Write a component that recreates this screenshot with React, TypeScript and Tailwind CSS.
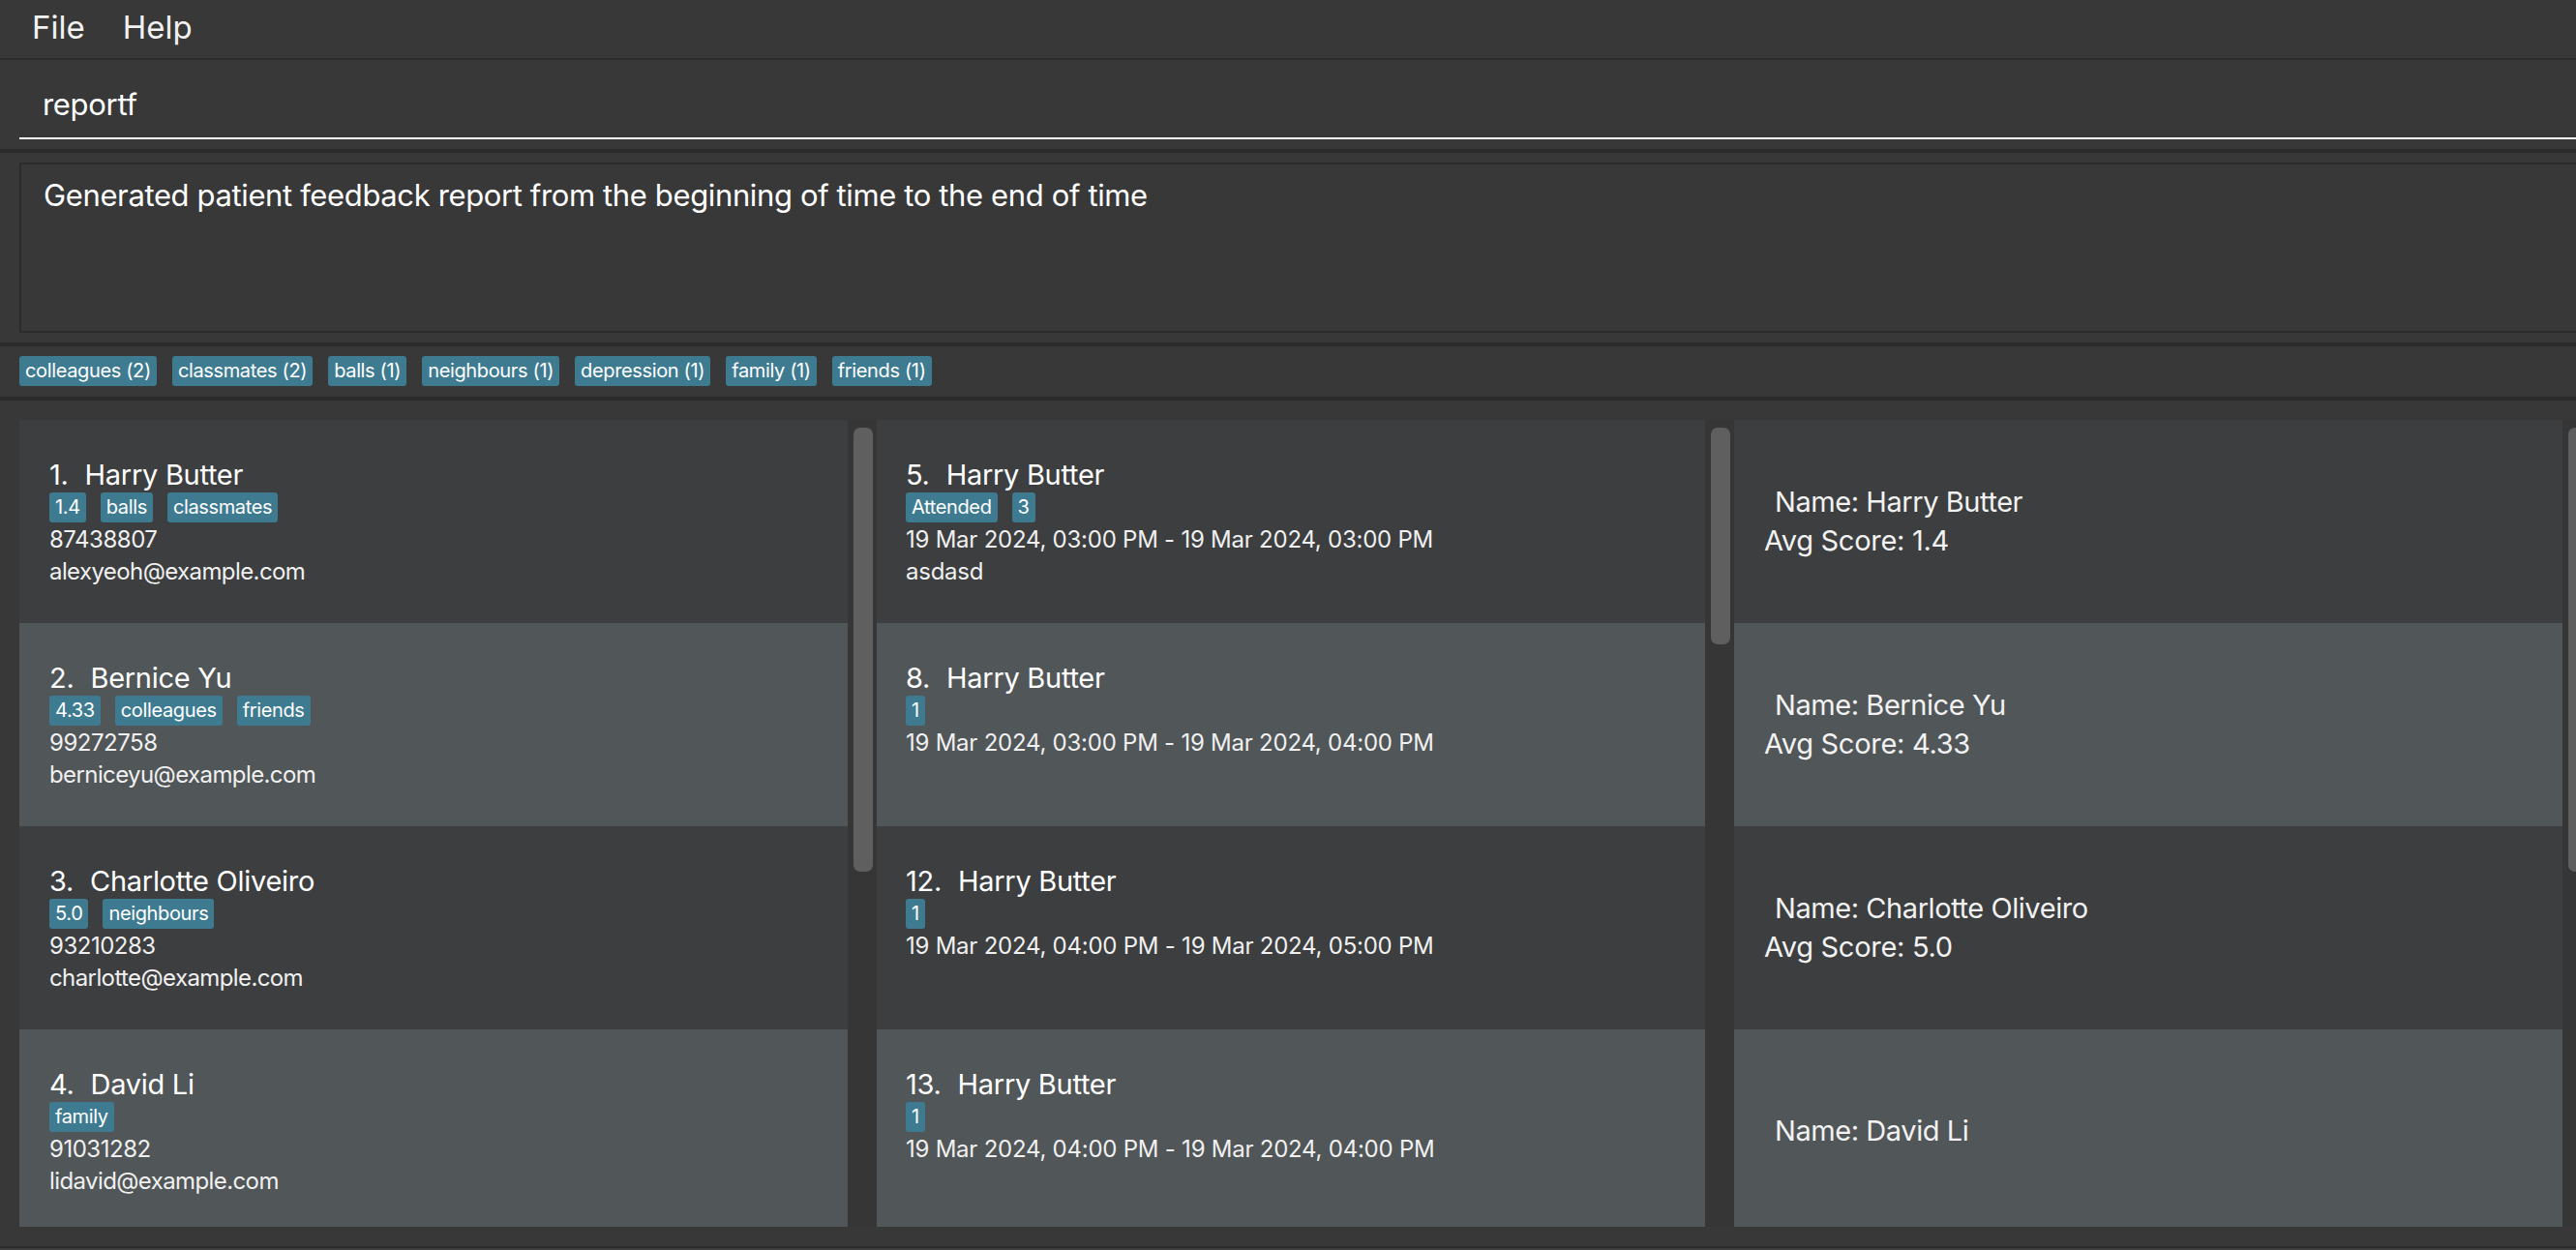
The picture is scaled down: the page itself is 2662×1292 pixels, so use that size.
import React from 'react';

const persons = [
  { id: 1, name: 'Harry Butter', tags: ['1.4', 'balls', 'classmates'], phone: '87438807', email: 'alexyeoh@example.com' },
  { id: 2, name: 'Bernice Yu', tags: ['4.33', 'colleagues', 'friends'], phone: '99272758', email: 'berniceyu@example.com' },
  { id: 3, name: 'Charlotte Oliveiro', tags: ['5.0', 'neighbours'], phone: '93210283', email: 'charlotte@example.com' },
  { id: 4, name: 'David Li', tags: ['family'], phone: '91031282', email: 'lidavid@example.com' },
];

const appointments = [
  { id: 5, name: 'Harry Butter', tags: ['Attended', '3'], time: '19 Mar 2024, 03:00 PM - 19 Mar 2024, 03:00 PM', note: 'asdasd' },
  { id: 8, name: 'Harry Butter', tags: ['1'], time: '19 Mar 2024, 03:00 PM - 19 Mar 2024, 04:00 PM' },
  { id: 12, name: 'Harry Butter', tags: ['1'], time: '19 Mar 2024, 04:00 PM - 19 Mar 2024, 05:00 PM' },
  { id: 13, name: 'Harry Butter', tags: ['1'], time: '19 Mar 2024, 04:00 PM - 19 Mar 2024, 04:00 PM' },
];

const scores = [
  { name: 'Harry Butter', avg: '1.4' },
  { name: 'Bernice Yu', avg: '4.33' },
  { name: 'Charlotte Oliveiro', avg: '5.0' },
  { name: 'David Li' },
];

const summaryTags = ['colleagues (2)', 'classmates (2)', 'balls (1)', 'neighbours (1)', 'depression (1)', 'family (1)', 'friends (1)'];

function Tag({ label }: { label: string }) {
  return (
    <span className="h-[31px] px-[6px] rounded-[3px] bg-[#3e7b91] text-white text-[20px] leading-[31px] tracking-[-0.018em]">
      {label}
    </span>
  );
}

function rowBg(i: number) {
  return i % 2 === 0 ? 'bg-[#3c3e3f]' : 'bg-[#515658]';
}

function Column({ thumbH, children }: { thumbH: string; children: React.ReactNode }) {
  return (
    <div className="flex w-[886px] shrink-0 h-full">
      <div className="w-[856px] h-full overflow-hidden">{children}</div>
      <div className="w-[30px] h-full bg-[#363636] pl-[6px] pt-[8px]">
        <div className={`w-[20px] rounded-[7px] bg-[#5f5f5f] ${thumbH}`} />
      </div>
    </div>
  );
}

function Name({ id, name }: { id: number; name: string }) {
  return (
    <div className="text-[29px] leading-[35px] text-white tracking-[-0.01em]">
      {id}.<span className="ml-[17px]">{name}</span>
    </div>
  );
}

export default function App() {
  return (
    <div className="w-[2662px] h-[1292px] overflow-hidden bg-[#383838] text-white" style={{ fontFamily: 'Inter, "Noto Sans", sans-serif' }}>
      <div className="w-[2720px]">
        {/* Menu */}
        <div className="h-[60px] flex items-start pl-[33px] pt-[8px] gap-[39px] text-[33px] leading-[40px] text-[#f2f2f2]">
          <span>File</span>
          <span>Help</span>
        </div>
        <div className="h-[2px] bg-[#2b2b2b]" />

        {/* Command box */}
        <div className="h-[92px] pt-[27px] pl-[20px]">
          <div className="h-[55px] border-b-2 border-white pl-[24px] text-[31px] leading-[37px] tracking-[-0.01em]">reportf</div>
        </div>
        <div className="h-[4px] bg-[#2b2b2b]" />

        {/* Result display */}
        <div className="h-[196px] pt-[10px] pl-[20px]">
          <div className="h-[176px] border-2 border-[#2b2b2b] pt-[13px] pl-[23px] text-[31px] leading-[37px] tracking-[-0.012em]">
            Generated patient feedback report from the beginning of time to the end of time
          </div>
        </div>
        <div className="h-[4px] bg-[#2b2b2b]" />

        {/* Tag summary */}
        <div className="h-[52px] pt-[10px] pl-[20px] flex items-start gap-[16px]">
          {summaryTags.map((t) => (
            <Tag key={t} label={t} />
          ))}
        </div>
        <div className="h-[4px] bg-[#2b2b2b]" />

        {/* Lists */}
        <div className="h-[874px] pt-[20px]">
          <div className="h-[834px] pl-[20px] flex">
            <Column thumbH="h-[459px]">
              {persons.map((p, i) => (
                <div key={p.id} className={`h-[210px] shrink-0 pl-[31px] pt-[39px] ${rowBg(i)}`}>
                  <Name id={p.id} name={p.name} />
                  <div className="flex gap-[15px] mt-[1px]">
                    {p.tags.map((t) => (
                      <Tag key={t} label={t} />
                    ))}
                  </div>
                  <div className="mt-[1px] text-[24px] leading-[33px] text-[#f0f0f0] tracking-[-0.02em]">{p.phone}</div>
                  <div className="text-[24px] leading-[33px] text-[#f0f0f0] tracking-[-0.025em]">{p.email}</div>
                </div>
              ))}
            </Column>
            <Column thumbH="h-[224px]">
              {appointments.map((a, i) => (
                <div key={a.id} className={`h-[210px] shrink-0 pl-[30px] pt-[39px] ${rowBg(i)}`}>
                  <Name id={a.id} name={a.name} />
                  <div className="flex gap-[15px] mt-[1px]">
                    {a.tags.map((t) => (
                      <Tag key={t} label={t} />
                    ))}
                  </div>
                  <div className="mt-[1px] text-[24px] leading-[33px] text-[#f0f0f0] tracking-[-0.01em]">{a.time}</div>
                  {a.note && <div className="text-[24px] leading-[33px] text-[#f0f0f0] tracking-[-0.01em]">{a.note}</div>}
                </div>
              ))}
            </Column>
            <Column thumbH="h-[459px]">
              {scores.map((s, i) => (
                <div key={s.name} className={`h-[210px] shrink-0 pl-[31px] flex flex-col justify-center ${rowBg(i)}`}>
                  <div className="ml-[11px] text-[29px] leading-[40px] text-[#f2f2f2] tracking-[-0.015em]">Name: {s.name}</div>
                  {s.avg && <div className="text-[29px] leading-[40px] text-[#f2f2f2] tracking-[-0.01em]">Avg Score: {s.avg}</div>}
                </div>
              ))}
            </Column>
          </div>
          <div className="h-[20px]" />
        </div>
        <div className="h-[2px] bg-[#2b2b2b]" />
        <div className="h-[10px] bg-[#3c3c3c]" />
      </div>
    </div>
  );
}
